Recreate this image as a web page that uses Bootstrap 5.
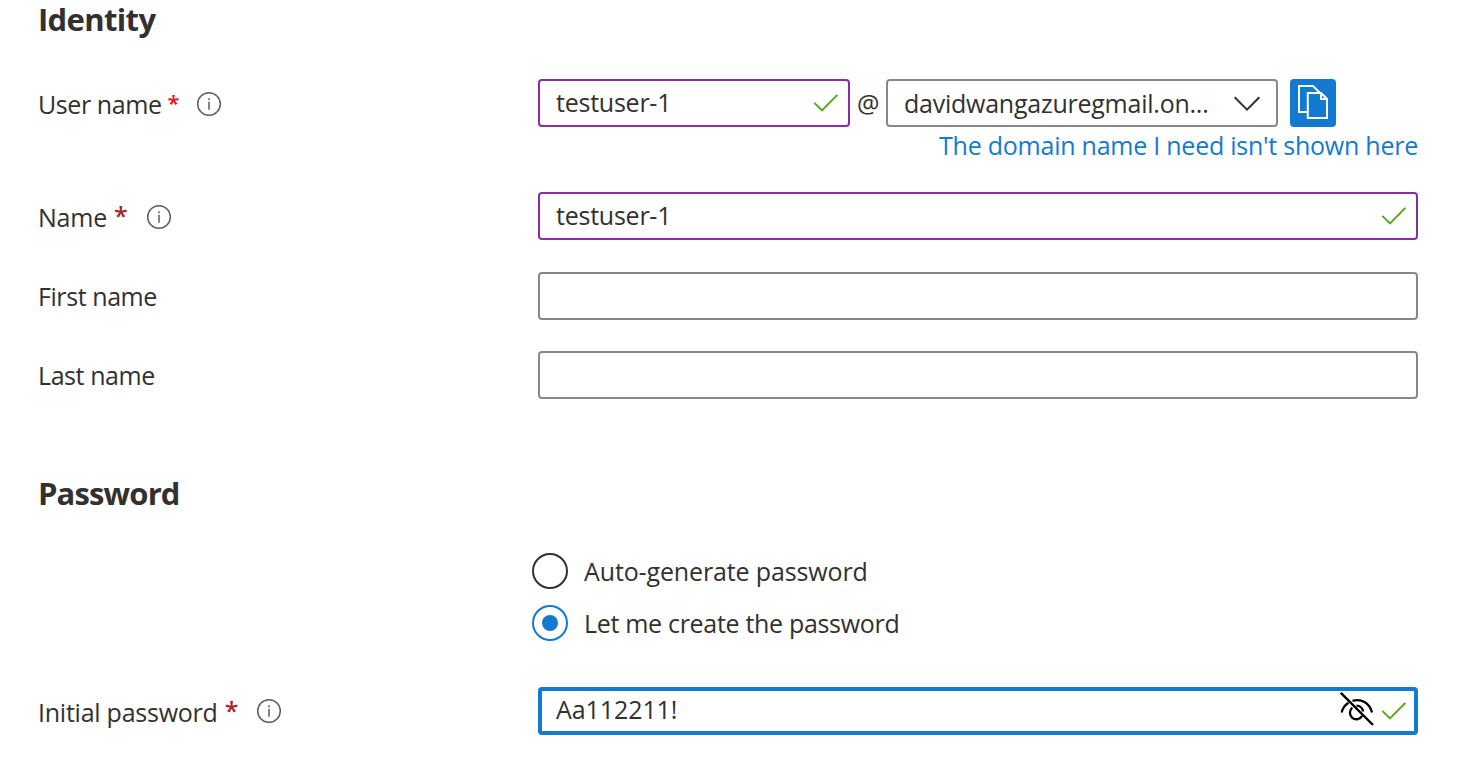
<!DOCTYPE html>
<html lang="en">
<head>
<meta charset="utf-8">
<meta name="viewport" content="width=device-width, initial-scale=1">
<title>New user</title>
<link href="https://cdn.jsdelivr.net/npm/bootstrap@5.3.0/dist/css/bootstrap.min.css" rel="stylesheet">
<style>
  body { font-family: "Open Sans", "Noto Sans", sans-serif; font-size: 25px; line-height: 48px; letter-spacing: -.24px; color: #323130; background: #fff; overflow: hidden; }
  .user-form { padding: 0 66px 0 38px; }
  .section-title { font-size: 31px; font-weight: 700; line-height: 38px; height: 40px; letter-spacing: -.65px; margin: 0; }
  .section-title.later { letter-spacing: -.85px; margin-top: 75px; }
  .gap-title { margin-top: 39px; }
  .gap-link { margin-top: 26px; }
  .gap-a { margin-top: 32px; }
  .gap-b { margin-top: 31px; }
  .gap-c { margin-top: 46px; }
  .field-label { width: 500px; flex: none; padding-top: 1px; height: 48px; white-space: nowrap; }
  .field-label.plain { padding-top: 0; }
  .field-label svg { margin: 11px 0 0 19px; }
  .field-label.name-label svg { margin-left: 20px; }
  .field-label.low svg { margin-top: 10px; }
  .snug { letter-spacing: -.42px; }
  .field-box { height: 48px; border: 2px solid #8a8886; border-radius: 4px; padding: 0 9px 0 16px; line-height: 44px; white-space: nowrap; }
  .field-box.edited { border-color: #8a2da5; }
  .field-box.edited > span { padding-bottom: 2px; line-height: 42px; }
  .field-box.focused { border: 4px solid #137ad1; padding: 0 7px 0 14px; letter-spacing: -.08px; }
  .field-box.focused > span { line-height: 36px; padding-bottom: 4px; }
  .name-box { width: 312px; }
  .domain-box { width: 392px; padding-right: 16px; }
  .at-sign { width: 36px; text-align: center; }
  .copy-btn { width: 46px; height: 48px; border: 0; border-radius: 4px; background: #137ad1; margin-left: 12px; }
  .copy-btn:hover { background: #137ad1; }
  .domain-link { color: #137ad1; line-height: 37px; height: 39px; }
  .domain-link a { color: inherit; text-decoration: none; }
  .req { color: #a4262c; width: 12px; margin-left: 7px; font-size: 25px; line-height: 45px; font-weight: 600; text-align: center; }
  .req.bright { color: #e81123; font-size: 22px; line-height: 44px; margin-left: 6px; }
  .req.bright + svg { margin-left: 16px; }
  .radio-ring { width: 36px; height: 36px; border: 2px solid #323130; border-radius: 50%; }
  .radio-ring.on { border-color: #137ad1; }
  .radio-dot { width: 16px; height: 16px; border-radius: 50%; background: #137ad1; }
  .radio-line { height: 36px; gap: 16px; line-height: 36px; letter-spacing: -.31px; }
  .radio-line .wide { letter-spacing: -.13px; }
  .radios { padding-left: 494px; gap: 16px; margin-top: 39px; }
  .eye-off { margin-right: 7px; }
  svg { display: block; flex: none; }
</style>
</head>
<body>
<svg class="d-none" xmlns="http://www.w3.org/2000/svg">
  <symbol id="tick" viewBox="0 0 26 20"><path d="M1.3 9.9 9 17.4 24.4 1.9" fill="none" stroke="#57a61c" stroke-width="2"/></symbol>
  <symbol id="info" viewBox="0 0 26 26"><circle cx="13" cy="13" r="11.3" fill="none" stroke="#605e5c" stroke-width="1.5"/><path d="M13 10.7v8M13 7.2v2" stroke="#605e5c" stroke-width="1.5"/></symbol>
</svg>
<main class="user-form">
  <h2 class="section-title">Identity</h2>
  <div class="d-flex gap-title">
    <div class="field-label d-flex"><span class="snug">User name</span><span class="req bright">*</span><svg width="26" height="26"><use href="#info"/></svg></div>
    <div class="flex-grow-1">
      <div class="d-flex">
        <div class="field-box edited name-box d-flex align-items-center justify-content-between"><span>testuser-1</span><svg width="26" height="20"><use href="#tick"/></svg></div>
        <span class="at-sign">@</span>
        <div class="field-box domain-box d-flex align-items-center justify-content-between"><span>davidwangazuregmail.on...</span><svg width="26" height="16" viewBox="0 0 26 16"><path d="M.7 2.300 13 14.600 25.300 2.300" fill="none" stroke="#323130" stroke-width="2"/></svg></div>
        <button class="btn copy-btn p-0" type="button" aria-label="Copy"><svg width="46" height="48" viewBox="0 0 46 48" fill="none" stroke="#fff" stroke-width="2"><path d="M17 33H9V7h14l6.500 6.500"/><path d="M17.800 14H31l6 6v19H17.800z"/><path d="M31 14v6H37"/></svg></button>
      </div>
      <div class="domain-link text-end"><a href="#">The domain name I need isn't shown here</a></div>
    </div>
  </div>
  <div class="d-flex gap-link">
    <div class="field-label name-label d-flex"><span>Name</span><span class="req">*</span><svg width="26" height="26"><use href="#info"/></svg></div>
    <div class="field-box edited flex-grow-1 d-flex align-items-center justify-content-between"><span>testuser-1</span><svg width="26" height="20"><use href="#tick"/></svg></div>
  </div>
  <div class="d-flex gap-a">
    <div class="field-label plain snug">First name</div>
    <div class="field-box flex-grow-1"></div>
  </div>
  <div class="d-flex gap-b">
    <div class="field-label plain snug">Last name</div>
    <div class="field-box flex-grow-1"></div>
  </div>
  <h2 class="section-title later">Password</h2>
  <div class="radios d-flex flex-column">
    <div class="radio-line d-flex align-items-center"><span class="radio-ring"></span><span class="wide">Auto-generate password</span></div>
    <div class="radio-line d-flex align-items-center"><span class="radio-ring on d-flex align-items-center justify-content-center"><span class="radio-dot"></span></span><span>Let me create the password</span></div>
  </div>
  <div class="d-flex gap-c">
    <div class="field-label low d-flex"><span>Initial password</span><span class="req">*</span><svg width="26" height="26"><use href="#info"/></svg></div>
    <div class="field-box focused flex-grow-1 d-flex align-items-center justify-content-between"><span>Aa112211!</span>
      <div class="d-flex align-items-center"><svg class="eye-off" width="34" height="38" viewBox="0 0 34 38" fill="none" stroke="#000" stroke-width="2.300"><path d="M1.600 20.500C2.600 16.500 5 13 8.500 10.800M12.500 8.900C21 6.200 29.500 10.500 32 20.500"/><path d="M12.300 15.700A6.500 6.500 0 1 0 22.200 23.700M16.500 13.700A6.500 6.500 0 0 1 23 19.500"/><path d="M.8.800 33 33"/></svg><svg width="26" height="20"><use href="#tick"/></svg></div>
    </div>
  </div>
</main>
<script src="https://cdn.jsdelivr.net/npm/bootstrap@5.3.0/dist/js/bootstrap.bundle.min.js"></script>
</body>
</html>
